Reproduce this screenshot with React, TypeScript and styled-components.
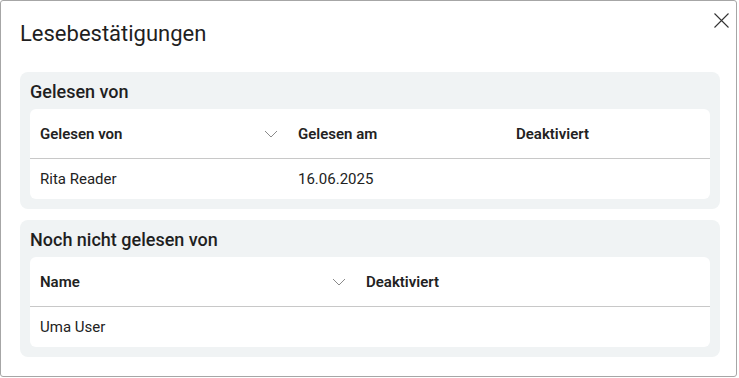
import React from 'react'
import styled, { createGlobalStyle } from 'styled-components'

const GlobalStyle = createGlobalStyle`
    html, body {
        margin: 0;
        padding: 0;
        background: #ffffff;
        font-family: Roboto, "Liberation Sans", sans-serif;
        color: #222222;
    }
`

const Dialog = styled.div`
    width: 737px;
    height: 377px;
    box-sizing: border-box;
    border: 1px solid #a6a6a6;
    border-radius: 3px;
    background: #ffffff;
    display: flex;
    flex-direction: column;
    padding: 0 16px 0 19px;
`

const Header = styled.div`
    display: flex;
    align-items: flex-start;
    justify-content: space-between;
    padding-top: 20px;
    height: 71px;
    flex-shrink: 0;
    box-sizing: border-box;
`

const Title = styled.h1`
    margin: 0;
    font-size: 22px;
    line-height: 26px;
    font-weight: 400;
    color: #1f1f1f;
`

const CloseButton = styled.button`
    border: none;
    background: transparent;
    padding: 0;
    margin: -9px -10px 0 0;
    width: 17px;
    height: 17px;
    display: flex;
    align-items: center;
    justify-content: center;
    cursor: pointer;
`

const Sections = styled.div`
    display: flex;
    flex-direction: column;
    gap: 11px;
`

const Section = styled.section`
    background: #f0f3f4;
    border-radius: 8px;
    padding: 10px;
    display: flex;
    flex-direction: column;
    gap: 7px;
`

const SectionTitle = styled.h2`
    margin: 0;
    font-size: 18px;
    line-height: 20px;
    font-weight: 500;
    color: #1f1f1f;
`

const Card = styled.div`
    background: #ffffff;
    border-radius: 6px;
    overflow: hidden;
`

const Row = styled.div<{ $cols: string; $head?: boolean }>`
    display: grid;
    grid-template-columns: ${p => p.$cols};
    height: ${p => (p.$head ? '50px' : '40px')};
    border-bottom: ${p => (p.$head ? '1px solid #c8c8c8' : 'none')};
    box-sizing: border-box;
    align-items: center;
`

const Cell = styled.div<{ $head?: boolean }>`
    padding: 0 10px;
    font-size: 15px;
    font-weight: ${p => (p.$head ? 600 : 400)};
    color: #222222;
    display: flex;
    align-items: center;
    justify-content: space-between;
    white-space: nowrap;
`

const Chevron = () => (
    <svg width="14" height="8" viewBox="0 0 14 8">
        <path d="M1 1 L7 7 L13 1" fill="none" stroke="#8a8a8a" strokeWidth="1" />
    </svg>
)

const CloseIcon = () => (
    <svg width="17" height="17" viewBox="0 0 17 17">
        <path d="M1.5 1.5 L15.5 15.5 M15.5 1.5 L1.5 15.5" stroke="#333333" strokeWidth="1.1" />
    </svg>
)

const readCols = '258px 218px 1fr'
const unreadCols = '326px 1fr'

const App = () => {
    return (
        <>
            <GlobalStyle />
            <Dialog>
                <Header>
                    <Title>Lesebestätigungen</Title>
                    <CloseButton title='Schließen'>
                        <CloseIcon />
                    </CloseButton>
                </Header>
                <Sections>
                    <Section>
                        <SectionTitle>Gelesen von</SectionTitle>
                        <Card>
                            <Row $cols={readCols} $head>
                                <Cell $head>Gelesen von <Chevron /></Cell>
                                <Cell $head>Gelesen am</Cell>
                                <Cell $head>Deaktiviert</Cell>
                            </Row>
                            <Row $cols={readCols}>
                                <Cell>Rita Reader</Cell>
                                <Cell>16.06.2025</Cell>
                                <Cell></Cell>
                            </Row>
                        </Card>
                    </Section>
                    <Section>
                        <SectionTitle>Noch nicht gelesen von</SectionTitle>
                        <Card>
                            <Row $cols={unreadCols} $head>
                                <Cell $head>Name <Chevron /></Cell>
                                <Cell $head>Deaktiviert</Cell>
                            </Row>
                            <Row $cols={unreadCols}>
                                <Cell>Uma User</Cell>
                                <Cell></Cell>
                            </Row>
                        </Card>
                    </Section>
                </Sections>
            </Dialog>
        </>
    )
}

export default App
